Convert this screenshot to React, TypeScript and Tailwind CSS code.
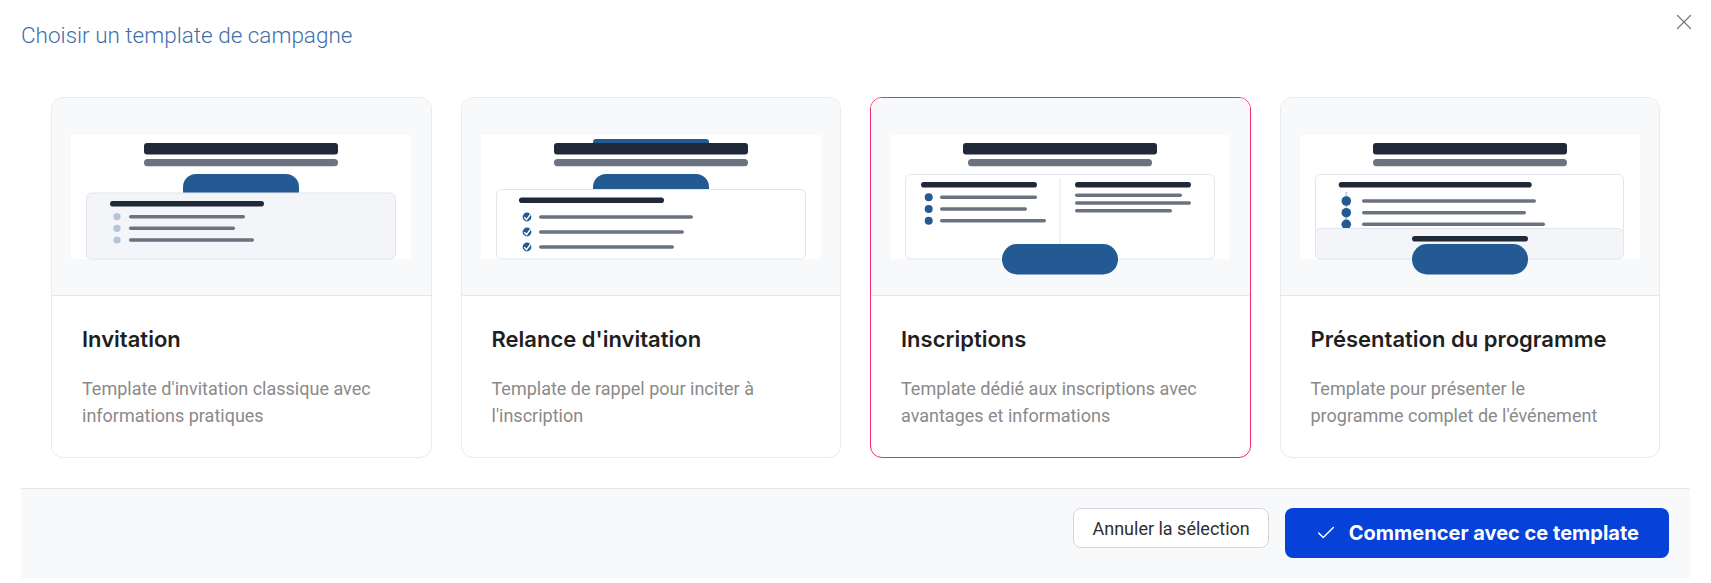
import { X, Check } from "lucide-react";

const DARK = "#1f2937";
const GRAY = "#6b7280";
const BLUE = "#245a94";
const LINE = "#e2e6ec";

function Bar({ x, cy, w, h = 3.4, fill = GRAY }: { x: number; cy: number; w: number; h?: number; fill?: string }) {
  return <rect x={x} y={cy - h / 2} width={w} height={h} rx={h / 2} fill={fill} />;
}

function Header() {
  return (
    <>
      <rect x={73} y={8} width={194} height={11.5} rx={3} fill={DARK} />
      <rect x={73} y={24} width={194} height={7.3} rx={3.6} fill={GRAY} />
    </>
  );
}

function InvitationThumb() {
  return (
    <>
      <Header />
      <rect x={112} y={39} width={116} height={30} rx={13} fill={BLUE} />
      <rect x={15.5} y={58} width={309} height={66} rx={5} fill="#f3f5f9" stroke={LINE} />
      <Bar x={39} cy={68.8} w={154} h={5.6} fill={DARK} />
      {[81.7, 93.3, 105].map((cy, i) => (
        <g key={cy}>
          <circle cx={46} cy={cy} r={3.6} fill="#b4c5db" />
          <Bar x={58} cy={cy} w={[116, 106, 125][i]} />
        </g>
      ))}
    </>
  );
}

function RelanceThumb() {
  return (
    <>
      <rect x={112} y={4} width={116} height={10} rx={3} fill={BLUE} />
      <Header />
      <rect x={112} y={39} width={116} height={30} rx={13} fill={BLUE} />
      <rect x={15.5} y={54.5} width={309} height={69.5} rx={5} fill="#ffffff" stroke={LINE} />
      <Bar x={38} cy={65.2} w={145} h={5.6} fill={DARK} />
      {[82, 97, 112].map((cy, i) => (
        <g key={cy}>
          <circle cx={46} cy={cy} r={4.4} fill={BLUE} />
          <path d={`M${43.2} ${cy + 0.2} L${45.6} ${cy + 2.6} L${49.4} ${cy - 2.6}`} fill="none" stroke="#ffffff" strokeWidth={1.5} />
          <Bar x={58} cy={cy} w={[154, 145, 135][i]} />
        </g>
      ))}
    </>
  );
}

function InscriptionsThumb() {
  return (
    <>
      <rect x={73} y={8} width={194} height={11.5} rx={3} fill={DARK} />
      <rect x={78} y={24} width={184} height={7.3} rx={3.6} fill={GRAY} />
      <rect x={15.5} y={39.5} width={309} height={84.5} rx={5} fill="#ffffff" stroke={LINE} />
      <line x1={170} y1={43} x2={170} y2={118} stroke={LINE} strokeWidth={1} />
      <Bar x={31} cy={49.8} w={116} h={5.6} fill={DARK} />
      {[62.3, 74, 85.7].map((cy, i) => (
        <g key={cy}>
          <circle cx={38.7} cy={cy} r={4} fill={BLUE} />
          <Bar x={50} cy={cy} w={[97, 87, 106][i]} />
        </g>
      ))}
      <Bar x={185} cy={49.8} w={116} h={5.6} fill={DARK} />
      {[60.3, 68, 75.7].map((cy, i) => (
        <Bar key={cy} x={185} cy={cy} w={[107, 116, 97][i]} />
      ))}
      <rect x={112} y={109} width={116} height={30.5} rx={15} fill={BLUE} />
    </>
  );
}

function ProgrammeThumb() {
  return (
    <>
      <Header />
      <rect x={15.5} y={39.5} width={308} height={64} rx={5} fill="#ffffff" stroke={LINE} />
      <Bar x={38.7} cy={49.8} w={193} h={5.6} fill={DARK} />
      <line x1={46.3} y1={57} x2={46.3} y2={90} stroke="#c5d0de" strokeWidth={2} />
      {[66, 77.7, 89.3].map((cy, i) => (
        <g key={cy}>
          <circle cx={46.3} cy={cy} r={4.8} fill={BLUE} />
          <Bar x={62} cy={cy} w={[174, 164, 183][i]} />
        </g>
      ))}
      <rect x={15.5} y={93.5} width={308} height={30.5} rx={5} fill="#f3f5f9" stroke={LINE} />
      <Bar x={112} cy={103.8} w={116} h={5.6} fill={DARK} />
      <rect x={112} y={109} width={116} height={30.5} rx={15} fill={BLUE} />
    </>
  );
}

const templates = [
  {
    title: "Invitation",
    description: "Template d'invitation classique avec informations pratiques",
    thumb: <InvitationThumb />,
  },
  {
    title: "Relance d'invitation",
    description: "Template de rappel pour inciter à l'inscription",
    thumb: <RelanceThumb />,
  },
  {
    title: "Inscriptions",
    description: "Template dédié aux inscriptions avec avantages et informations",
    thumb: <InscriptionsThumb />,
    selected: true,
  },
  {
    title: "Présentation du programme",
    description: "Template pour présenter le programme complet de l'événement",
    thumb: <ProgrammeThumb />,
  },
];

export default function App() {
  return (
    <div className="relative min-h-[583px] w-full bg-white font-['Roboto',sans-serif]">
      <button className="absolute right-[14px] top-[9px] text-[#777777]">
        <X className="h-[26px] w-[26px]" strokeWidth={1.1} />
      </button>
      <div className="px-[21px] pt-[19px]">
        <h2 className="text-[22.5px] font-light leading-8 text-[#3f6fa8]">Choisir un template de campagne</h2>

        <div className="mt-[46px] grid grid-cols-4 gap-[29px] px-[30px]">
          {templates.map((t) => (
            <div
              key={t.title}
              className={
                "overflow-hidden rounded-xl border bg-white " +
                (t.selected ? "border-[#ef2a72]" : "border-[#e8eaee]")
              }
            >
              <div className="flex h-[198px] items-center justify-center border-b border-[#e5e7eb] bg-[#f8f9fb]">
                <svg width="340" height="124" viewBox="0 0 340 124" className="block overflow-visible">
                  <rect x={0} y={0} width={340} height={124} fill="#ffffff" />
                  {t.thumb}
                </svg>
              </div>
              <div className="pb-[28px] pl-[30px] pr-[38px] pt-[29px]">
                <h3 className="whitespace-nowrap font-['Inter',sans-serif] text-[22px] font-semibold leading-7 text-[#1f1f1f]">
                  {t.title}
                </h3>
                <p className="mt-[22px] text-[18px] leading-[27px] text-[#8a8a8a]">{t.description}</p>
              </div>
            </div>
          ))}
        </div>

        <div className="mt-[30px] flex h-[90px] items-start justify-end gap-4 border-t border-[#e5e7eb] bg-[#f8f9fa] px-[21px] pt-[19px]">
          <button className="h-10 rounded-lg border border-[#d6d6da] bg-white px-[18px] text-[18px] text-[#2e2e2e]">
            Annuler la sélection
          </button>
          <button className="flex h-[50px] items-center gap-[12px] rounded-lg bg-[#0641d8] pl-[30px] pr-[30px] font-['Inter',sans-serif] text-[20px] font-bold text-white">
            <Check className="h-[22px] w-[22px]" strokeWidth={1.6} />
            Commencer avec ce template
          </button>
        </div>
      </div>
    </div>
  );
}
